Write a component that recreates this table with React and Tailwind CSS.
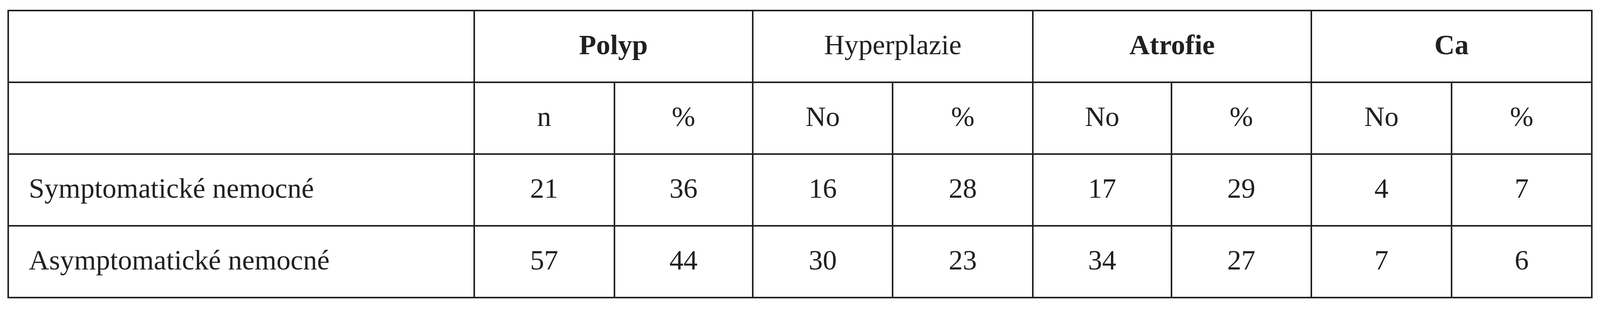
import React from 'react';

// ── Data ─────────────────────────────────────────────────────────────────────
const GROUPS = [
  { label: 'Polyp',       bold: true,  sub: ['n', '%'] },
  { label: 'Hyperplazie', bold: false, sub: ['No', '%'] },
  { label: 'Atrofie',     bold: true,  sub: ['No', '%'] },
  { label: 'Ca',          bold: true,  sub: ['No', '%'] },
];

const ROWS = [
  { label: 'Symptomatické nemocné',  values: ['21', '36', '16', '28', '17', '29', '4', '7'] },
  { label: 'Asymptomatické nemocné', values: ['57', '44', '30', '23', '34', '27', '7', '6'] },
];

// every cell draws its own right + bottom rule; the grid draws top + left
const cell = 'h-[184px] min-w-0 border-r-4 border-b-4 border-[#231f20] flex items-center pb-[9px]';

function Cell({ children, className = '' }) {
  return <div className={`${cell} ${className}`}>{children}</div>;
}

export default function App() {
  return (
    <div className="min-h-[800px] bg-white pt-[25px] px-[0.46%] text-[#231f20] font-['Liberation_Serif','Times_New_Roman',serif] text-[72px] leading-none">
      <div className="w-full grid grid-cols-[1272fr_383fr_378fr_382fr_383fr_378fr_382fr_383fr_383fr] border-l-4 border-t-4 border-[#231f20]">

        {/* header: groups */}
        <Cell />
        {GROUPS.map(g => (
          <Cell key={g.label} className={`col-span-2 justify-center ${g.bold ? 'font-bold' : ''}`}>
            {g.label}
          </Cell>
        ))}

        {/* header: sub columns */}
        <Cell />
        {GROUPS.flatMap(g => g.sub.map((s, i) => (
          <Cell key={g.label + i} className="justify-center">{s}</Cell>
        )))}

        {/* body */}
        {ROWS.map(r => (
          <React.Fragment key={r.label}>
            <Cell className="pl-[51px]">{r.label}</Cell>
            {r.values.map((v, i) => (
              <Cell key={i} className="justify-center">{v}</Cell>
            ))}
          </React.Fragment>
        ))}
      </div>
    </div>
  );
}
